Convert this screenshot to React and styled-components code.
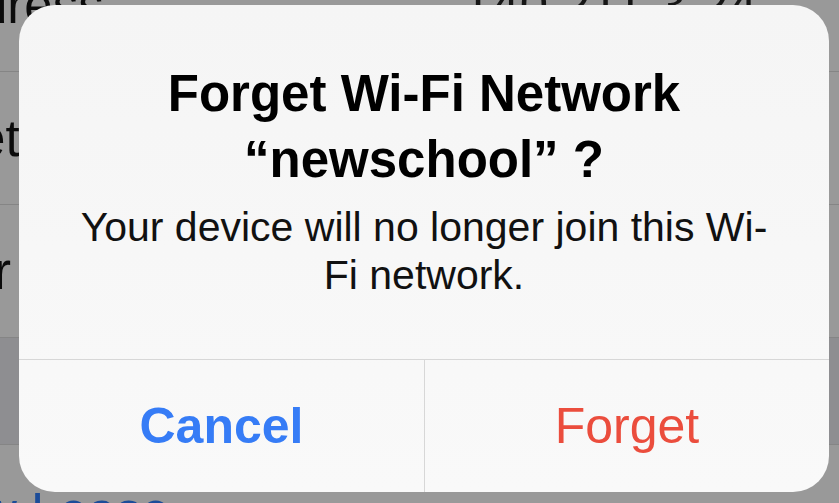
import React from 'react';
import styled, { createGlobalStyle } from 'styled-components';

const GlobalStyle = createGlobalStyle`
  html, body {
    margin: 0;
    padding: 0;
    background: #999999;
    overflow: hidden;
  }
  * { box-sizing: border-box; }
`;

const Screen = styled.div`
  position: relative;
  width: 839px;
  height: 503px;
  overflow: hidden;
  background: #999999;
  font-family: "Liberation Sans", Arial, sans-serif;
`;

// settings list behind the alert, cropped on the left like the source shot
const List = styled.div`
  display: flex;
  flex-direction: column;
  width: 1041px;
  margin-left: -142px;
  margin-top: -61px;
`;

const Row = styled.div`
  display: flex;
  align-items: center;
  justify-content: space-between;
  height: 133px;
  padding-right: 142px;
  border-bottom: 1px solid #858585;
  font-size: 51px;
  color: ${p => (p.$link ? '#1c4c99' : '#0b0b0b')};
`;

const SectionGap = styled.div`
  height: 107px;
  background: #8e8e91;
  border-bottom: 1px solid #858585;
`;

const Value = styled.span`
  color: #161616;
`;

const Alert = styled.div`
  position: absolute;
  left: 19px;
  top: 5px;
  width: 810px;
  height: 487px;
  border-radius: 36px;
  overflow: hidden;
  display: flex;
  flex-direction: column;
  background: linear-gradient(180deg, #f5f5f5 0%, #f7f7f7 50%, #f9f9f9 100%);
`;

const Body = styled.div`
  flex: 1;
  padding: 56px 48px 0;
  text-align: center;
  color: #000;
`;

const Title = styled.h2`
  margin: 0;
  font-size: 51px;
  font-weight: 700;
  line-height: 66px;
`;

const Message = styled.p`
  margin: 10px 0 0;
  font-size: 41px;
  font-weight: 400;
  line-height: 48px;
  color: #111;
`;

const Actions = styled.div`
  display: grid;
  grid-template-columns: 405px 1fr;
  height: 133px;
  border-top: 1px solid #d7d7d7;
`;

const ActionButton = styled.button`
  appearance: none;
  border: 0;
  border-left: ${p => (p.$divided ? '1px solid #d7d7d7' : '0')};
  background: transparent;
  padding: 0;
  font-family: inherit;
  font-size: 50px;
  font-weight: ${p => (p.$bold ? 700 : 400)};
  color: ${p => (p.$destructive ? '#eb4d3d' : '#367cf6')};
  display: flex;
  align-items: center;
  justify-content: center;
`;

export default function App() {
  return (
    <>
      <GlobalStyle />
      <Screen>
        <List>
          <Row><span>IP Address</span><Value>140.211.3.24</Value></Row>
          <Row><span>Subnet Mask</span><Value>255.255.255.0</Value></Row>
          <Row><span>Router</span><Value>140.211.3.1</Value></Row>
          <SectionGap />
          <Row $link><span>Renew Lease</span></Row>
        </List>
        <Alert>
          <Body>
            <Title>Forget Wi-Fi Network “newschool” ?</Title>
            <Message>Your device will no longer join this Wi-Fi network.</Message>
          </Body>
          <Actions>
            <ActionButton $bold>Cancel</ActionButton>
            <ActionButton $divided $destructive>Forget</ActionButton>
          </Actions>
        </Alert>
      </Screen>
    </>
  );
}
